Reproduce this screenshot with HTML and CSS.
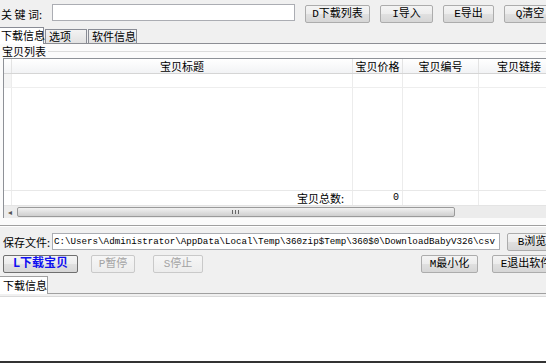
FILE: index.html
```html
<!DOCTYPE html>
<html>
<head>
    <meta charset="utf-8">
    <title>DownloadBaby</title>
    <link rel="stylesheet" href="styles.css">
</head>
<body>
<div class="app">
    <div class="search-row">
        <span class="label kw-label">关 键 词:</span>
        <div class="keyword"></div>
        <button class="btn btn-d">D下载列表</button>
        <button class="btn btn-i">I导入</button>
        <button class="btn btn-e">E导出</button>
        <button class="btn btn-q">Q清空</button>
    </div>

    <div class="tabs">
        <div class="tab active tab-info">下载信息</div>
        <div class="tab tab-opt">选项</div>
        <div class="tab tab-soft">软件信息</div>
    </div>

    <div class="page">
        <div class="group-title"><span>宝贝列表</span><i></i></div>
        <div class="grid">
            <div class="grid-row head">
                <div class="cell"></div>
                <div class="cell">宝贝标题</div>
                <div class="cell">宝贝价格</div>
                <div class="cell">宝贝编号</div>
                <div class="cell">宝贝链接</div>
            </div>
            <div class="grid-row first">
                <div class="cell"></div>
                <div class="cell"></div>
                <div class="cell"></div>
                <div class="cell"></div>
                <div class="cell"></div>
            </div>
            <div class="grid-row body">
                <div class="cell"></div>
                <div class="cell"></div>
                <div class="cell"></div>
                <div class="cell"></div>
                <div class="cell"></div>
            </div>
            <div class="grid-row foot">
                <div class="cell"></div>
                <div class="cell sum-label">宝贝总数:</div>
                <div class="cell sum-value">0</div>
                <div class="cell"></div>
                <div class="cell"></div>
            </div>
            <div class="hscroll">
                <div class="arrow">◂</div>
                <div class="thumb"><span class="grip"></span></div>
                <div class="arrow right">▸</div>
            </div>
        </div>
    </div>

    <div class="splitter"></div>

    <div class="save-row">
        <span class="label save-label">保存文件:</span>
        <div class="path">C:\Users\Administrator\AppData\Local\Temp\360zip$Temp\360$0\DownloadBabyV326\csv</div>
        <button class="btn btn-browse">B浏览</button>
    </div>

    <div class="action-row">
        <button class="btn btn-start">L下载宝贝</button>
        <button class="btn disabled btn-pause">P暂停</button>
        <button class="btn disabled btn-stop">S停止</button>
        <button class="btn btn-min">M最小化</button>
        <button class="btn btn-exit">E退出软件</button>
    </div>

    <div class="log-tabs">
        <div class="log-tab">下载信息</div>
    </div>
    <div class="log"></div>
</div>
</body>
</html>
```

FILE: styles.css
```css
body {
    margin: 0;
    width: 546px;
    height: 363px;
    overflow: hidden;
    background: #f0f0f0;
    font-family: "Noto Sans CJK SC", sans-serif;
    font-size: 11px;
    color: #000;
}
.app {
    width: 560px;
    height: 363px;
}
.label {
    white-space: nowrap;
    line-height: 16px;
}

/* top search bar */
.search-row {
    display: flex;
    align-items: center;
    height: 27px;
}
.kw-label {
    width: 48px;
    padding-left: 1px;
    box-sizing: border-box;
}
.keyword {
    width: 243px;
    height: 17px;
    margin-left: 4px;
    margin-top: -2px;
    box-sizing: border-box;
    border: 1px solid #abadb3;
    background: white;
}
.btn {
    height: 18px;
    box-sizing: border-box;
    padding: 0;
    border: 1px solid #acacac;
    border-radius: 2px;
    background: linear-gradient(#f4f4f4, #ececec 50%, #e0e0e0 51%, #d6d6d6);
    font-family: "Liberation Mono", "Noto Sans CJK SC", monospace;
    font-size: 11px;
    line-height: 16px;
    color: #000;
    white-space: nowrap;
    overflow: hidden;
}
.btn-d { width: 65px; margin-left: 10px; }
.btn-i { width: 53px; margin-left: 10px; }
.btn-e { width: 51px; margin-left: 10px; }
.btn-q { width: 52px; margin-left: 10px; }

/* tabs */
.tabs {
    display: flex;
    align-items: flex-end;
    height: 16px;
    margin-left: -1px;
    border-bottom: 1px solid #8c8e94;
}
.tab {
    height: 13px;
    border: 1px solid #898c95;
    border-bottom: 0;
    margin-right: 1px;
    padding-left: 3px;
    background: linear-gradient(#f3f3f3, #e2e2e2);
    line-height: 13px;
    white-space: nowrap;
}
.tab.active {
    height: 16px;
    margin-bottom: -1px;
    padding-left: 1px;
    background: white;
    line-height: 15px;
}
.tab-info { width: 42px; }
.tab-opt { width: 37px; }
.tab-soft { width: 44px; }

/* tab page */
.page {
    background: #fbfbfb;
    padding-bottom: 7px;
}
.group-title {
    display: flex;
    align-items: center;
    height: 14px;
    padding-left: 2px;
}
.group-title span {
    line-height: 14px;
}
.group-title i {
    flex: 1;
    height: 1px;
    margin-left: 2px;
    margin-top: 1px;
    background: #dcdcdc;
}

/* data grid */
.grid {
    margin-left: 3px;
    border-top: 1px solid #8e9197;
    border-left: 1px solid #8e9197;
    background: white;
}
.grid-row {
    display: grid;
    grid-template-columns: 8px 341px 50px 76px 1fr;
}
.cell {
    border-right: 1px solid #ececec;
    white-space: nowrap;
    overflow: hidden;
}
.head {
    height: 15px;
    box-sizing: border-box;
    border-bottom: 1px solid #d5d5d5;
    background: linear-gradient(#ffffff, #f2f3f5);
}
.head .cell {
    text-align: center;
    line-height: 14px;
    border-right-color: #e3e3e3;
}
.first {
    height: 13px;
    border-bottom: 1px solid #eeeeee;
}
.first .cell:first-child {
    background: #f4f4f4;
}
.body {
    height: 102px;
}
.foot {
    height: 14px;
    border-top: 1px solid #e8e8e8;
}
.foot .cell {
    line-height: 14px;
}
.sum-label {
    text-align: right;
    padding-right: 8px;
}
.sum-value {
    text-align: right;
    padding-right: 3px;
    font-family: "Liberation Mono", monospace;
    font-size: 10px;
}

/* horizontal scrollbar */
.hscroll {
    display: flex;
    align-items: center;
    height: 12px;
    background: #ececec;
    border-top: 1px solid #e4e4e4;
}
.arrow {
    width: 12px;
    font-size: 8px;
    line-height: 12px;
    text-align: center;
    color: #555;
}
.arrow.right {
    margin-left: auto;
    margin-right: 6px;
}
.thumb {
    width: 438px;
    height: 10px;
    margin-left: 1px;
    box-sizing: border-box;
    border: 1px solid #9a9a9a;
    border-radius: 2px;
    background: linear-gradient(#f2f2f2, #dcdcdc 60%, #cfcfcf);
    position: relative;
}
.grip {
    position: absolute;
    left: 214px;
    top: 2px;
    width: 5px;
    height: 4px;
    border-left: 1px solid #666;
    border-right: 1px solid #666;
}
.grip::after {
    content: "";
    position: absolute;
    left: 2px;
    top: 0;
    width: 1px;
    height: 4px;
    background: #666;
}

.splitter {
    height: 1px;
    border-bottom: 1px solid #fff;
    background: #a0a0a0;
}

/* save path */
.save-row {
    display: flex;
    align-items: center;
    height: 17px;
    margin-top: 6px;
}
.save-label {
    width: 52px;
    padding-left: 3px;
    box-sizing: border-box;
}
.path {
    width: 448px;
    height: 17px;
    box-sizing: border-box;
    border: 1px solid #abadb3;
    background: white;
    padding-left: 1px;
    font-family: "Liberation Mono", monospace;
    font-size: 9.2px;
    line-height: 15px;
    white-space: nowrap;
    overflow: hidden;
}
.btn-browse {
    width: 50px;
    margin-left: 7px;
}

/* action buttons */
.action-row {
    display: flex;
    align-items: center;
    height: 18px;
    margin-top: 5px;
}
.btn-start {
    width: 75px;
    margin-left: 3px;
    border-color: #6f6f6f;
    color: #1010f0;
    font-weight: bold;
    font-size: 12px;
}
.btn.disabled {
    color: #a3a3a3;
    border-color: #c9c9c9;
    background: linear-gradient(#f6f6f6, #ececec);
}
.btn-pause { width: 44px; margin-left: 13px; }
.btn-stop { width: 50px; margin-left: 18px; }
.btn-min { width: 57px; margin-left: auto; }
.btn-exit { width: 68px; margin-left: 14px; }

/* log area */
.log-tabs {
    display: flex;
    align-items: flex-end;
    height: 17px;
    margin-top: 3px;
    border-bottom: 1px solid #a0a0a0;
}
.log-tab {
    width: 44px;
    height: 17px;
    margin-bottom: -1px;
    border: 1px solid #a0a0a0;
    border-left: 0;
    border-bottom: 0;
    padding-left: 3px;
    background: white;
    line-height: 17px;
}
.log {
    height: 64px;
    margin-top: 2px;
    border-top: 1px solid #dadada;
    border-bottom: 2px solid #333;
    background: white;
}
```
